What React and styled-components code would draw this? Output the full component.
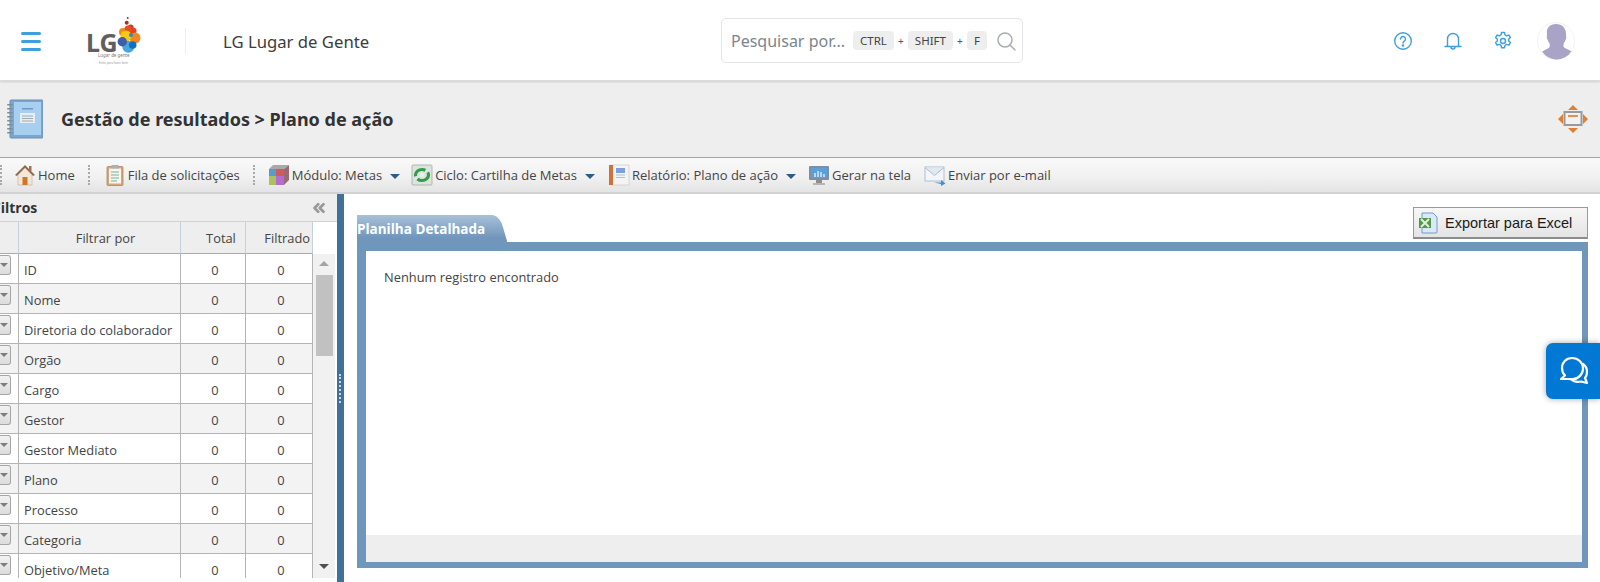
import React from "react";
import styled, { createGlobalStyle } from "styled-components";
import { ChevronsLeft } from "lucide-react";

const Global = createGlobalStyle`
  html, body { margin: 0; padding: 0; height: 582px; overflow: hidden; background: #fff; }
  #root { height: 582px; }
  * { box-sizing: border-box; }
`;

const Page = styled.div`
  width: 1600px; height: 582px; overflow: hidden; position: relative;
  display: flex; flex-direction: column; background: #fff;
`;

/* Top header */
const Header = styled.header`
  height: 81px; flex: none; display: flex; align-items: center; background: #fff;
  border-bottom: 1px solid #dcdcdc; box-shadow: 0 1px 2px rgba(0,0,0,.14);
  position: relative; z-index: 2; padding: 2px 0 0 21px;
`;
const Burger = styled.div`
  width: 20px; display: flex; flex-direction: column; gap: 5px; flex: none;
  i { display: block; height: 3px; border-radius: 1.5px; background: #3d9fdc; }
`;
const LogoBox = styled.div`width: 60px; height: 50px; margin-left: 45px; flex: none;`;
const VSep = styled.div`width: 1px; height: 26px; background: #eeeeee; margin: 0 0 0 39px; flex: none;`;
const AppName = styled.div`
  margin-left: 37px; width: 498px; flex: none;
  font: 16.7px "Noto Sans", sans-serif; color: #3c3c3c;
`;
const Search = styled.div`
  width: 302px; height: 45px; flex: none; border: 1px solid #e4e5ea; border-radius: 5px;
  display: flex; align-items: center; padding: 1px 0 0 9px; margin-top: -2px;
  font: 16px "Noto Sans", sans-serif; color: #7b858e;
`;
const Placeholder = styled.span`width: 122px; flex: none; white-space: nowrap;`;
const Key = styled.span`
  height: 19px; padding: 0 7px; background: #eeeeee; border-radius: 4px; flex: none;
  display: flex; align-items: center; font: 11.5px "Noto Sans", sans-serif; color: #444;
`;
const Plus = styled.span`width: 14px; text-align: center; font: 10px "Noto Sans", sans-serif; color: #555; flex: none;`;
const SearchIcon = styled.svg`width: 20px; height: 20px; margin-left: 9px; flex: none;`;
const HeaderIcons = styled.div`
  margin-left: 370px; display: flex; align-items: center; flex: none;
`;
const HIcon = styled.svg`width: 20px; height: 20px; margin-right: ${p => p.$gap}px; flex: none;`;

/* Page title band */
const TitleBand = styled.div`
  height: 77px; flex: none; background: #eeeeee; display: flex; align-items: center;
  padding: 0 12px 1px 7px; border-bottom: 1px solid #a3a3a3;
`;
const Title = styled.h1`
  margin: 0 0 0 18px; flex: 1;
  font: bold 18px "Noto Sans", sans-serif; color: #333;
`;

/* Toolbar */
const Toolbar = styled.div`
  height: 36px; flex: none; display: flex; align-items: center;
  background: linear-gradient(#f9f9f9, #f1f1f1 55%, #e4e4e4);
  border-bottom: 2px solid #d2d2d2;
`;
const Grip = styled.div`
  width: 0; height: 20px; border-left: 2px dotted #a8a8a8; flex: none; margin: ${p => p.$m};
`;
const TItem = styled.div`
  display: flex; align-items: center; flex: none; color: #444; white-space: nowrap;
  margin-left: ${p => p.$ml || 0}px; font: 13px "Open Sans", sans-serif;
  svg.ic { width: 22px; height: 22px; margin-right: 2px; flex: none; }
`;
const Caret = styled.span`
  width: 0; height: 0; border: 5px solid transparent; border-top-color: #2d5b8a; border-bottom: 0;
  margin-left: 8px; margin-top: 3px; flex: none;
`;

/* Main */
const Main = styled.div`flex: 1; display: flex; min-height: 0; background: #fff;`;
const Side = styled.aside`
  width: 337px; flex: none; display: flex; flex-direction: column; overflow: hidden; padding-bottom: 4px;
`;
const SideHead = styled.div`
  height: 28px; flex: none; background: #eeeeee; border-bottom: 1px solid #c9d2e0;
  display: flex; align-items: center; justify-content: space-between; padding-right: 9px;
  font: bold 14px "Open Sans", sans-serif; color: #333;
  span { margin-left: -7px; }
`;
const ScrollWrap = styled.div`flex: 1; display: flex; min-height: 0; overflow: hidden;`;
const GridBox = styled.div`width: 313px; flex: none;`;
const HeadRow = styled.div`
  display: grid; grid-template-columns: 19px 162px 65px 67px; height: 32px;
`;
const HeadCell = styled.div`
  background: #eeeeee; border-right: 1px solid #c6cfdd; border-bottom: 1px solid #aaa;
  display: flex; align-items: center; justify-content: ${p => p.$end ? "flex-end" : "center"};
  padding-right: ${p => p.$end ? 2 : 0}px; padding-left: ${p => p.$pl || 0}px;
  font: 12.85px "Open Sans", sans-serif; color: #444;
`;
const Row = styled.div`
  display: grid; grid-template-columns: 19px 162px 65px 67px; height: 30px;
  background: ${p => p.$alt ? "#f3f3f3" : "#fff"};
  font: 12.85px "Open Sans", sans-serif; color: #444;
`;
const Cell = styled.div`
  border-right: 1px solid #b4b4b4; border-bottom: 1px solid #b4b4b4;
  display: flex; align-items: center; padding-top: 2px;
  justify-content: ${p => p.$center ? "center" : "flex-start"};
  padding-left: ${p => p.$center ? 4 : 5}px; white-space: nowrap; overflow: hidden;
`;
const DropCell = styled.div`
  border-right: 1px solid #b4b4b4; border-bottom: 1px solid #b4b4b4; padding-top: 1px;
`;
const DropBtn = styled.div`
  width: 11px; height: 20px; border: 1px solid #a6a6a6; border-left: 0; border-radius: 0 3px 3px 0;
  background: linear-gradient(#f2f2f2, #dcdcdc); padding-top: 7px;
  &::after { content: ""; display: block; width: 0; height: 0; border: 4px solid transparent; border-top-color: #7d7d7d; border-bottom: 0; }
`;
const Scrollbar = styled.div`
  width: 22px; flex: none; background: #f1f1f1; margin-top: 32px; display: flex; flex-direction: column; align-items: center;
`;
const ScrollBtn = styled.div`
  width: 0; height: 0; border: 5px solid transparent; margin-top: ${p => p.$mt}px; flex: none;
  ${p => p.$up ? "border-bottom-color: #a3a3a3; border-top: 0;" : "border-top-color: #505050; border-bottom: 0;"}
`;
const Thumb = styled.div`width: 17px; height: 81px; background: #c1c1c1; margin-top: 9px; flex: none;`;
const Splitter = styled.div`
  width: 7px; flex: none; background: #3f7199; display: flex; align-items: center; justify-content: center;
  &::after { content: ""; width: 2px; height: 29px; border-left: 2px dotted #c7d6e2; }
`;

/* Content */
const Content = styled.section`flex: 1; min-width: 0; display: flex; flex-direction: column; padding: 13px 12px 0 13px;`;
const TabLine = styled.div`height: 35px; flex: none; display: flex; justify-content: space-between; align-items: flex-start;`;
const Tab = styled.div`
  width: 151px; height: 27px; margin-top: 8px;
  background: linear-gradient(#a8c1da, #7096bb 85%);
  clip-path: path("M0 0 H136 Q142 2 145 9 L150 26 V27 H0 Z");
  font: bold 13.5px "Open Sans", sans-serif; color: #fff; line-height: 29px; white-space: nowrap;
`;
const ExportBtn = styled.div`
  width: 175px; height: 32px; border: 1px solid #9a9a9a; border-bottom: 2px solid #8c8c8c;
  background: linear-gradient(#f7f7f7, #e4e4e4);
  display: flex; align-items: center; padding-left: 4px; gap: 7px;
  font: 14.5px "Liberation Sans", sans-serif; color: #1a1a1a;
`;
const Panel = styled.div`
  width: 1231px; height: 326px; flex: none; border: solid #6f96bb; border-width: 9px 6px 6px 9px;
  display: flex; flex-direction: column; background: #fff;
`;
const PanelBody = styled.div`
  flex: 1; padding: 17px 18px; font: 12.85px "Open Sans", sans-serif; color: #444;
`;
const PanelFoot = styled.div`height: 27px; flex: none; background: #eeeeee;`;
const ChatBtn = styled.div`
  position: absolute; left: 1546px; top: 343px; width: 54px; height: 56px;
  background: #0078d4; border-radius: 7px 0 0 7px; box-shadow: 0 0 6px rgba(0,0,0,.35);
  display: flex; align-items: center; justify-content: center; padding-left: 1px;
`;

const rows = ["ID","Nome","Diretoria do colaborador","Orgão","Cargo","Gestor","Gestor Mediato","Plano","Processo","Categoria","Objetivo/Meta"];

const Logo = () => (
  <svg width="60" height="50" viewBox="0 0 60 50">
    <text x="0" y="36" fontFamily="Noto Sans, sans-serif" fontWeight="700" fontSize="25" fill="#5f5f5f">LG</text>
    <circle cx="41.700" cy="2" r="1" fill="#9b3a2b" />
    <circle cx="40.700" cy="6.700" r="2" fill="#a8322a" />
    <circle cx="44.700" cy="11.300" r="2.800" fill="#d6321f" />
    <circle cx="47" cy="15" r="3.500" fill="#e8401f" />
    <circle cx="37" cy="16" r="4" fill="#f08a1d" />
    <circle cx="42" cy="13" r="3.500" fill="#e2521e" />
    <circle cx="49" cy="22" r="5.500" fill="#f08a1d" />
    <circle cx="40" cy="20" r="5.500" fill="#f6c915" />
    <circle cx="45" cy="19" r="2" fill="#1e8fd0" />
    <circle cx="42.300" cy="30.700" r="6" fill="#4aa5dc" />
    <circle cx="36.300" cy="25.700" r="4.700" fill="#3d5fa8" />
    <circle cx="46.700" cy="29" r="3.800" fill="#1271bd" />
    <text x="12" y="41" fontFamily="Noto Sans, sans-serif" fontSize="4.400" fill="#777">Lugar de gente</text>
    <text x="13" y="48" fontFamily="Noto Sans, sans-serif" fontSize="3" fill="#999">Feito para fazer bem</text>
  </svg>
);

const BookIcon = () => (
  <svg width="36" height="40" viewBox="0 0 36 40" style={{ flex: "none" }}>
    <rect x="3" y="1" width="33" height="38" rx="1" fill="#7aa7cf" stroke="#6a8fb0" />
    <rect x="7" y="3" width="27" height="33" fill="#a9cff0" />
    <rect x="13" y="14" width="15" height="10" fill="#e8edf3" />
    <rect x="15" y="9" width="11" height="1.500" fill="#6d9bc4" />
    <path d="M15 17h11M15 19.500h11M15 22h11" stroke="#8b98a7" strokeWidth=".8" />
    {[5,9,13,17,21,25,29,33].map(y => <rect key={y} x="0" y={y} width="6" height="1.600" rx=".8" fill="#7e8d9c" />)}
  </svg>
);

const MoveIcon = () => (
  <svg width="30" height="28" viewBox="0 0 30 28" style={{ flex: "none" }}>
    <path d="M15 0l5 5H10zM15 28l-5-5h10zM0 14l5-5v10zM30 14l-5 5V9z" fill="#e07f30" />
    <rect x="6.500" y="7" width="17" height="13" fill="#f1f1f1" stroke="#9a9a9a" strokeWidth="2" />
    <rect x="10" y="10" width="10" height="2" fill="#e5914d" />
  </svg>
);

const HomeIc = () => (
  <svg className="ic" viewBox="0 0 22 22"><path d="M1 11L11 1l10 10-2 1-8-8-8 8z" fill="#8a6a50" /><path d="M4 11l7-7 7 7v10H4z" fill="#f4e7d6" stroke="#c9a98c" strokeWidth=".6" /><rect x="8.500" y="13" width="5" height="8" fill="#c9792f" /><rect x="15" y="2" width="2.500" height="5" fill="#9b7558" /></svg>
);
const ClipIc = () => (
  <svg className="ic" viewBox="0 0 22 22"><rect x="3" y="2.500" width="16" height="19" rx="1" fill="#d9a679" stroke="#ad7a50" strokeWidth=".7" /><rect x="5" y="4.500" width="12" height="15" fill="#f6f6f2" /><rect x="7.500" y="1" width="7" height="3.500" fill="#a9b0b6" /><path d="M7 8h8M7 11h8M7 14h8M7 17h6" stroke="#7fb08e" strokeWidth="1" /></svg>
);
const CubeIc = () => (
  <svg className="ic" viewBox="0 0 22 22"><path d="M1 5h15v16H1z" fill="#5a9ad4" /><path d="M8 5h8v7H8z" fill="#d6595a" /><path d="M1 12h7v9H1z" fill="#a9c35c" /><path d="M8 12h8v9H8z" fill="#b46cd0" /><path d="M1 5l4-4h16l-5 4z" fill="#a9a9a9" /><path d="M16 5l5-4v15l-5 5z" fill="#9a6a74" /></svg>
);
const CycleIc = () => (
  <svg className="ic" viewBox="0 0 22 22"><rect x="1" y="1" width="20" height="20" rx="1" fill="#dfe3df" stroke="#a3a9a3" strokeWidth=".8" /><ellipse cx="11" cy="11" rx="6.500" ry="5.500" fill="none" stroke="#2f9e44" strokeWidth="3.200" strokeDasharray="14 3" /><circle cx="11" cy="11" r="2" fill="#e8f3ea" /></svg>
);
const ReportIc = () => (
  <svg className="ic" viewBox="0 0 22 22"><rect x="3" y="1" width="18" height="20" fill="#f4f4f4" stroke="#c8c8c8" strokeWidth=".7" /><rect x="1" y="1" width="4" height="20" fill="#d2703a" /><rect x="8" y="4" width="9" height="5" fill="#7d9fe0" /><path d="M8 11h9M8 13.500h9" stroke="#b5bfcc" strokeWidth="1" /></svg>
);
const ScreenIc = () => (
  <svg className="ic" viewBox="0 0 22 22"><rect x="1" y="2" width="20" height="14" rx="1" fill="#7f8f9f" /><rect x="3" y="4" width="16" height="10" fill="#5aa0dc" /><path d="M7 13v-4M10 13V7M13 13V8M16 13v-3" stroke="#dbe8f4" strokeWidth="1.500" /><rect x="8" y="16" width="6" height="3" fill="#8d8d8d" /><rect x="5" y="19" width="12" height="2" fill="#b5b5b5" /></svg>
);
const MailIc = () => (
  <svg className="ic" viewBox="0 0 22 22"><rect x="1" y="3" width="19" height="14" fill="#f2f6fa" stroke="#9fb3c4" strokeWidth=".8" /><path d="M1 3.500l9.500 8 9.500-8" fill="#dfe9f2" stroke="#9fb3c4" strokeWidth=".8" /><path d="M10 18.500h7v-2.500l4.500 3.500-4.500 2.500v-2z" fill="#3d8fdc" /></svg>
);
const ExcelIc = () => (
  <svg width="20" height="22" viewBox="0 0 20 22" style={{ flex: "none" }}><path d="M4 1h11l4 4v15a1 1 0 0 1-1 1H4z" fill="#dbe9f6" stroke="#6f9bcb" strokeWidth="1" /><path d="M1 6h12v10H1z" fill="#4f9a4a" /><path d="M3 7l8 8M11 7l-8 8" stroke="#e3efdd" strokeWidth="2" /></svg>
);

export default function App() {
  return (
    <Page>
      <Global />
      <Header>
        <Burger><i /><i /><i /></Burger>
        <LogoBox><Logo /></LogoBox>
        <VSep />
        <AppName>LG Lugar de Gente</AppName>
        <Search>
          <Placeholder>Pesquisar por...</Placeholder>
          <Key>CTRL</Key><Plus>+</Plus><Key>SHIFT</Key><Plus>+</Plus><Key>F</Key>
          <SearchIcon viewBox="0 0 20 20" fill="none" stroke="#a9adb2" strokeWidth="1.500">
            <circle cx="9" cy="9" r="7" /><path d="M14 14l5 5" strokeLinecap="round" />
          </SearchIcon>
        </Search>
        <HeaderIcons>
          <HIcon $gap={30} viewBox="0 0 20 20" fill="none" stroke="#3d9fdc" strokeWidth="1.400">
            <circle cx="10" cy="10" r="8.300" />
            <path d="M7.500 8a2.500 2.500 0 1 1 3.800 2.100c-.9.600-1.300 1-1.300 2" strokeLinecap="round" />
            <circle cx="10" cy="14.500" r=".6" fill="#3d9fdc" />
          </HIcon>
          <HIcon $gap={30} viewBox="0 0 20 20" fill="none" stroke="#3d9fdc" strokeWidth="1.400">
            <path d="M4.500 15V8a5.500 5.500 0 0 1 11 0v7" />
            <path d="M2 15.500c2-.2 2.500-.5 2.500-1M18 15.500c-2-.2-2.500-.5-2.500-1M2 15.500h16M8 16a2 2 0 0 0 4 0" strokeLinecap="round" />
          </HIcon>
          <HIcon $gap={24} viewBox="0 0 20 20" fill="none" stroke="#3d9fdc" strokeWidth="1.400">
            <circle cx="10" cy="10" r="2.500" />
            <path d="M8.500 1.500h3l.5 2.400 1.600.9 2.300-.8 1.500 2.600-1.800 1.600v1.800l1.800 1.600-1.500 2.600-2.300-.8-1.600.9-.5 2.400h-3l-.5-2.400-1.600-.9-2.300.8-1.500-2.600 1.800-1.600V8.200L2.600 6.600l1.500-2.600 2.300.8 1.600-.9z" strokeLinejoin="round" />
          </HIcon>
          <svg width="38" height="38" viewBox="0 0 38 38" style={{ flex: "none" }}>
            <circle cx="19" cy="19" r="18.500" fill="#fff" stroke="#f3f3f3" />
            <path d="M19 2c6 0 10 4 10 10 0 3 .8 4-.3 5.500-.5 1.500-1.200 3-2.200 4.300v3c1.200 1.500 5.500 3 8 4.500A18.500 18.500 0 0 1 19 37.500 18.500 18.500 0 0 1 5 29.500c2.500-1.500 6.500-3 7.700-4.500v-3.200c-1-1.300-1.700-2.800-2.200-4.300C9.200 16 10 15 10 12 9 6 13 2 19 2z" fill="#a8a3c7" />
          </svg>
        </HeaderIcons>
      </Header>

      <TitleBand>
        <BookIcon />
        <Title>Gestão de resultados &gt; Plano de ação</Title>
        <MoveIcon />
      </TitleBand>

      <Toolbar>
        <Grip $m="0 12px 0 0" />
        <TItem><HomeIc />Home</TItem>
        <Grip $m="0 14px 0 13px" />
        <TItem><ClipIc />Fila de solicitações</TItem>
        <Grip $m="0 13px 0 13px" />
        <TItem><CubeIc />Módulo: Metas<Caret /></TItem>
        <TItem $ml={11}><CycleIc />Ciclo: Cartilha de Metas<Caret /></TItem>
        <TItem $ml={13}><ReportIc />Relatório: Plano de ação<Caret /></TItem>
        <TItem $ml={12}><ScreenIc />Gerar na tela</TItem>
        <TItem $ml={13}><MailIc />Enviar por e-mail</TItem>
      </Toolbar>

      <Main>
        <Side>
          <SideHead>
            <span>Filtros</span>
            <ChevronsLeft size={18} color="#999999" strokeWidth={3.6} />
          </SideHead>
          <ScrollWrap>
            <GridBox>
              <HeadRow>
                <HeadCell />
                <HeadCell $pl={12}>Filtrar por</HeadCell>
                <HeadCell $pl={16}>Total</HeadCell>
                <HeadCell $end>Filtrado</HeadCell>
              </HeadRow>
              {rows.map((r, i) => (
                <Row key={r} $alt={i % 2 === 1}>
                  <DropCell><DropBtn /></DropCell>
                  <Cell>{r}</Cell>
                  <Cell $center>0</Cell>
                  <Cell $center>0</Cell>
                </Row>
              ))}
            </GridBox>
            <Scrollbar>
              <ScrollBtn $up $mt={7} />
              <Thumb />
              <ScrollBtn $mt={208} />
            </Scrollbar>
          </ScrollWrap>
        </Side>
        <Splitter />
        <Content>
          <TabLine>
            <Tab>Planilha Detalhada</Tab>
            <ExportBtn><ExcelIc />Exportar para Excel</ExportBtn>
          </TabLine>
          <Panel>
            <PanelBody>Nenhum registro encontrado</PanelBody>
            <PanelFoot />
          </Panel>
        </Content>
      </Main>

      <ChatBtn>
        <svg width="32" height="32" viewBox="0 0 32 32" fill="none" stroke="#fff" strokeWidth="2.200" strokeLinejoin="round" strokeLinecap="round">
          <path d="M14 3C8 3 4 7.500 4 13c0 3 1 5.500 3 7.500L3 24h8c1 .3 2 .4 3 .4 6 0 11-5 11-11S20 3 14 3z" />
          <path d="M25 9c3 2 4 5 4 8 0 2.500-.8 4.500-2 6l2 5-6-1.500c-3 .8-7 .5-10-2.500" />
        </svg>
      </ChatBtn>
    </Page>
  );
}
